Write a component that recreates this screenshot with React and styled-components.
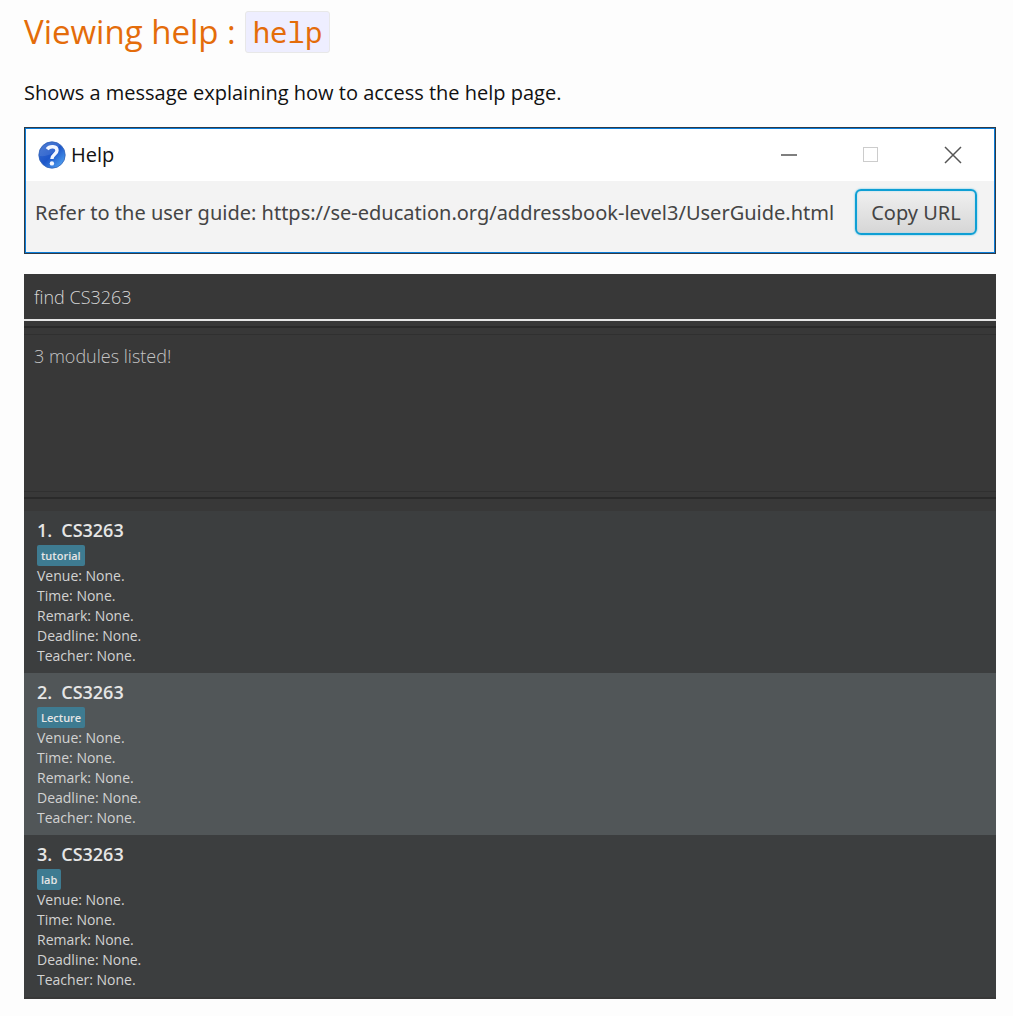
import React from "react";
import styled, { createGlobalStyle } from "styled-components";

const Global = createGlobalStyle`
  * { box-sizing: border-box; }
  body {
    margin: 0;
    background: #fdfdfd;
    color: #111;
    font-family: "Open Sans", "Noto Sans", sans-serif;
  }
`;

const Page = styled.main`
  padding: 11px 17px 17px 24px;
`;

const Heading = styled.h2`
  display: flex;
  align-items: center;
  gap: 9px;
  margin: 0;
  height: 42px;
  font-size: 33px;
  line-height: 40px;
  font-weight: 400;
  color: #e46c0a;
`;

const Code = styled.code`
  padding: 0 7px;
  border: 1px solid #e8e8e8;
  border-radius: 3px;
  background: #eeeeff;
  font-family: "Noto Sans Mono", "DejaVu Sans Mono", monospace;
  font-size: 29px;
`;

const Lead = styled.p`
  margin: 24px 0 18px;
  font-size: 20px;
  line-height: 32px;
`;

const Window = styled.section`
  border: 1px solid #2f3b47;
  outline: 1px solid #0a7cd8;
  outline-offset: -2px;
  background: #f3f3f3;
`;

const TitleBar = styled.header`
  display: flex;
  align-items: center;
  gap: 5px;
  height: 52px;
  padding: 0 29px 0 12px;
  margin: 1px;
  margin-bottom: 0;
  background: #fff;
`;

const WindowName = styled.h3`
  flex: 1;
  margin: 0;
  font-size: 20px;
  line-height: 30px;
  font-weight: 400;
  color: #111;
`;

const Controls = styled.div`
  display: flex;
  gap: 58px;
`;

const Control = styled.button`
  display: flex;
  padding: 0;
  border: 0;
  background: none;
  color: #555;
`;

const WindowBody = styled.div`
  display: flex;
  align-items: center;
  justify-content: space-between;
  height: 72px;
  padding: 0 18px 10px 10px;
  white-space: nowrap;
  color: #444;
  font-family: "Noto Sans", "Open Sans", sans-serif;
  font-size: 20px;
`;

const CopyButton = styled.button`
  width: 122px;
  height: 46px;
  padding: 0;
  border: 2px solid #0e9fd4;
  border-radius: 6px;
  background: linear-gradient(#f0f0f0, #d6d6d6);
  box-shadow: 0 0 2px #4fbde3, inset 0 0 2px #9bd5ea;
  color: #444;
  font: inherit;
`;

const AppPanel = styled.section`
  margin-top: 20px;
  padding-bottom: 2px;
  background: #383838;
`;

const CommandInput = styled.input`
  display: block;
  width: 100%;
  height: 47px;
  padding: 0 10px;
  border: 0;
  border-bottom: 2px solid #e6e6e6;
  outline: 0;
  background: #383838;
  color: #d6d6d6;
  font: 300 18px "Open Sans", sans-serif;
`;

const ResultFrame = styled.div`
  margin: 5px 0 12px;
  padding: 6px 0 5px;
  border: solid #2a2a2a;
  border-width: 2px 0;
`;

const Result = styled.output`
  display: block;
  height: 158px;
  padding: 7px 10px;
  border: solid #303030;
  border-width: 1px 0;
  color: #c4c4c4;
  font-size: 18px;
  line-height: 28px;
  font-weight: 300;
`;

const ModuleList = styled.ol`
  margin: 0;
  padding: 0;
  list-style: none;
`;

const Module = styled.li`
  padding: 9px 13px 7px;
  background: ${(p) => (p.$alternate ? "#515658" : "#3c3e3f")};
  color: #d2d2d2;
  font-size: 14px;
  line-height: 20px;
`;

const ModuleTitle = styled.h4`
  display: flex;
  gap: 9px;
  margin: 0 0 4px;
  font-size: 18px;
  line-height: 21px;
  font-weight: 600;
  color: #e6e6e6;
`;

const Tag = styled.span`
  display: block;
  width: fit-content;
  padding: 0 4px;
  border-radius: 2px;
  background: #3e7b91;
  color: #e6e6e6;
  font-size: 11px;
  line-height: 21px;
  font-weight: 600;
`;

const Detail = styled.p`
  margin: 0;
`;

const modules = ["tutorial", "Lecture", "lab"];
const fields = ["Venue", "Time", "Remark", "Deadline", "Teacher"];

function HelpIcon() {
  return (
    <svg width="28" height="28" viewBox="0 0 28 28" aria-hidden="true">
      <defs>
        <linearGradient id="ball" x1="0" y1="0" x2="1" y2="1">
          <stop offset="0" stopColor="#3b6fd0" />
          <stop offset="0.5" stopColor="#1d56c9" />
          <stop offset="1" stopColor="#5cb4fb" />
        </linearGradient>
      </defs>
      <circle cx="14" cy="14" r="13.2" fill="url(#ball)" stroke="#3564b8" strokeWidth="0.8" />
      <path d="M1.5 15C10 16 18 12 22 3.8A13 13 0 0 0 1.5 15Z" fill="#fff" opacity=".1" />
      <path d="M9.2 8.2C11.5 4.800 19 4.800 19 9.500C19 13.300 13.900 13.300 13.900 18" fill="none" stroke="#f4f7ff" strokeWidth="3.4" />
      <circle cx="13.9" cy="22.4" r="2.2" fill="#f4f7ff" />
    </svg>
  );
}

export default function App() {
  return (
    <Page>
      <Global />
      <Heading>
        Viewing help : <Code>help</Code>
      </Heading>
      <Lead>Shows a message explaining how to access the help page.</Lead>
      <Window>
        <TitleBar>
          <HelpIcon />
          <WindowName>Help</WindowName>
          <Controls>
            <Control aria-label="Minimize">
              <svg width="24" height="24" viewBox="0 0 24 24">
                <path d="M4 12H20" stroke="currentColor" strokeWidth="1.5" />
              </svg>
            </Control>
            <Control aria-label="Maximize" disabled>
              <svg width="24" height="24" viewBox="0 0 24 24">
                <rect x="4.5" y="4.5" width="14" height="14" fill="none" stroke="#ccc" />
              </svg>
            </Control>
            <Control aria-label="Close">
              <svg width="24" height="24" viewBox="0 0 24 24">
                <path d="M4 4L20 20M20 4L4 20" stroke="currentColor" strokeWidth="1.5" />
              </svg>
            </Control>
          </Controls>
        </TitleBar>
        <WindowBody>
          <span>Refer to the user guide: https://se-education.org/addressbook-level3/UserGuide.html</span>
          <CopyButton>Copy URL</CopyButton>
        </WindowBody>
      </Window>
      <AppPanel>
        <CommandInput aria-label="Command" defaultValue="find CS3263" />
        <ResultFrame>
          <Result>3 modules listed!</Result>
        </ResultFrame>
        <ModuleList>
          {modules.map((tag, i) => (
            <Module key={tag} $alternate={i % 2 === 1}>
              <ModuleTitle>
                <span>{i + 1}.</span>
                <span>CS3263</span>
              </ModuleTitle>
              <Tag>{tag}</Tag>
              {fields.map((field) => (
                <Detail key={field}>{field}: None.</Detail>
              ))}
            </Module>
          ))}
        </ModuleList>
      </AppPanel>
    </Page>
  );
}
